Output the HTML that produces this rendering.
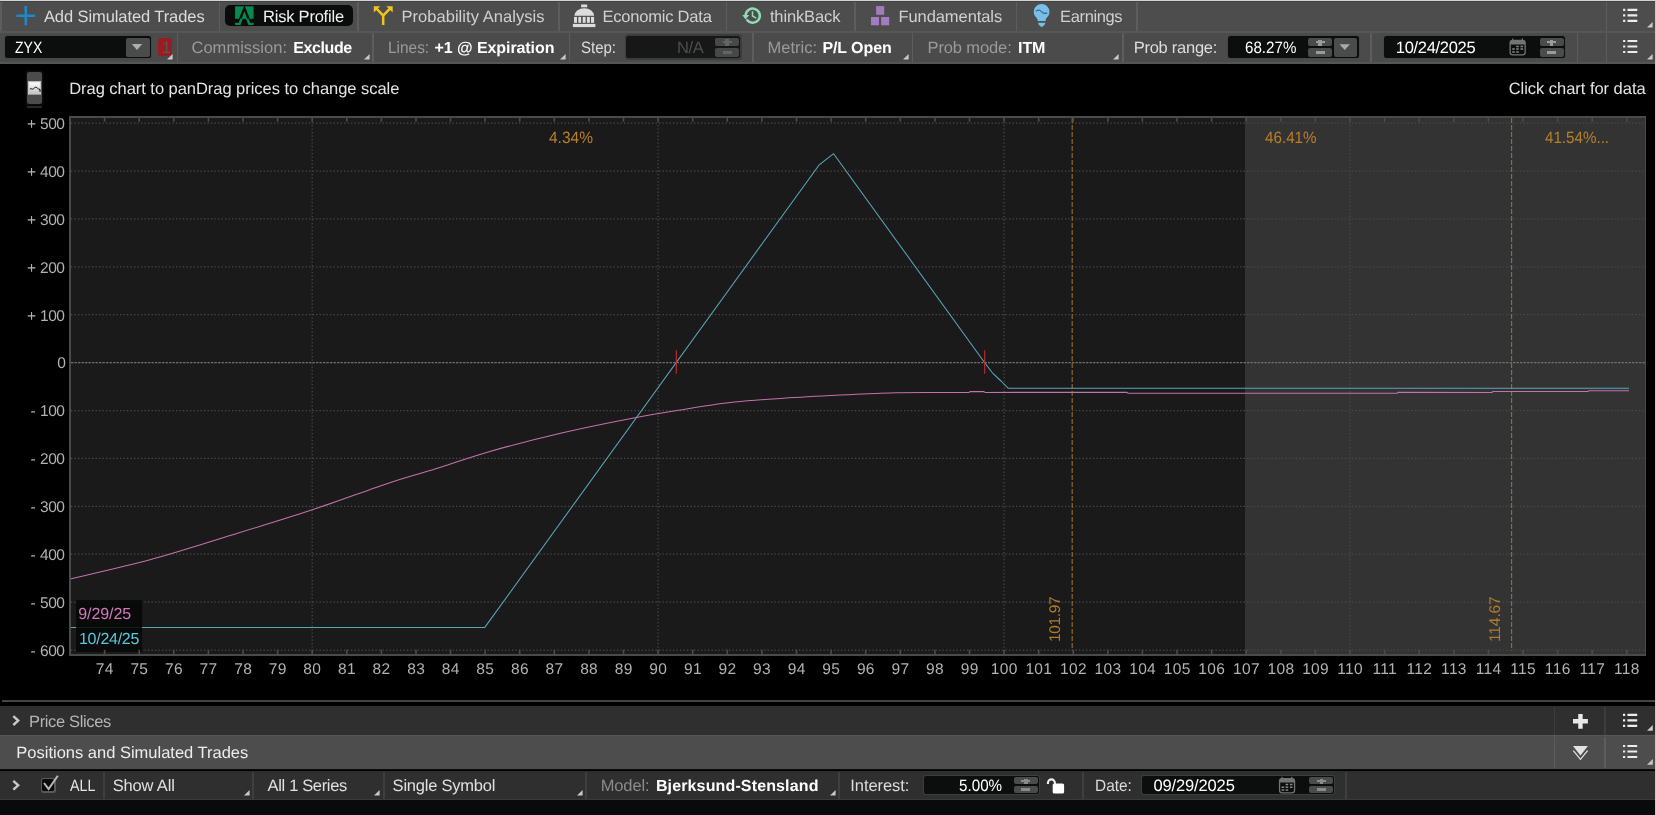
<!DOCTYPE html>
<html><head><meta charset="utf-8"><title>Risk Profile</title>
<style>
html,body{margin:0;padding:0;background:#000;}
body{width:1656px;height:815px;overflow:hidden;position:relative;font-family:"Liberation Sans", sans-serif;}
.t{position:absolute;white-space:pre;line-height:20px;height:20px;font-family:"Liberation Sans", sans-serif;text-rendering:geometricPrecision;}
.r{position:absolute;display:block;}
svg{position:absolute;display:block;overflow:visible}
#root{position:absolute;left:0;top:0;width:1656px;height:815px;will-change:transform;}
</style></head><body><div id="root">
<div class="r" style="left:0px;top:0px;width:1656px;height:64px;background:#4d4d4d;"></div>
<div class="r" style="left:0px;top:0px;width:1656px;height:1px;background:#d2d2d2;"></div>
<div class="r" style="left:0px;top:1px;width:1656px;height:1px;background:#424242;"></div>
<div class="r" style="left:0px;top:31px;width:1656px;height:2px;background:#555656;"></div>
<div class="r" style="left:0px;top:33px;width:1656px;height:29px;background:#4b4b4b;"></div>
<div class="r" style="left:0px;top:62px;width:1656px;height:2px;background:#545555;"></div>
<div class="r" style="left:0px;top:2px;width:2px;height:29px;background:#5c5e5e;"></div>
<div class="r" style="left:218.55px;top:2px;width:1.5px;height:29px;background:#5c5e5e;"></div>
<div class="r" style="left:357.45px;top:2px;width:1.5px;height:29px;background:#5c5e5e;"></div>
<div class="r" style="left:558.15px;top:2px;width:1.5px;height:29px;background:#5c5e5e;"></div>
<div class="r" style="left:725.65px;top:2px;width:1.5px;height:29px;background:#5c5e5e;"></div>
<div class="r" style="left:854.25px;top:2px;width:1.5px;height:29px;background:#5c5e5e;"></div>
<div class="r" style="left:1015.85px;top:2px;width:1.5px;height:29px;background:#5c5e5e;"></div>
<div class="r" style="left:1136.35px;top:2px;width:1.5px;height:29px;background:#5c5e5e;"></div>
<div class="r" style="left:1605.55px;top:2px;width:1.5px;height:29px;background:#5c5e5e;"></div>
<div class="r" style="left:176.75px;top:33px;width:1.5px;height:29px;background:#5c5e5e;"></div>
<div class="r" style="left:372.05px;top:33px;width:1.5px;height:29px;background:#5c5e5e;"></div>
<div class="r" style="left:568.65px;top:33px;width:1.5px;height:29px;background:#5c5e5e;"></div>
<div class="r" style="left:752.05px;top:33px;width:1.5px;height:29px;background:#5c5e5e;"></div>
<div class="r" style="left:911.75px;top:33px;width:1.5px;height:29px;background:#5c5e5e;"></div>
<div class="r" style="left:1122.05px;top:33px;width:1.5px;height:29px;background:#5c5e5e;"></div>
<div class="r" style="left:1370.45px;top:33px;width:1.5px;height:29px;background:#5c5e5e;"></div>
<div class="r" style="left:1576.75px;top:33px;width:1.5px;height:29px;background:#5c5e5e;"></div>
<div class="r" style="left:1605.55px;top:33px;width:1.5px;height:29px;background:#5c5e5e;"></div>
<div class="r" style="left:224.6px;top:5px;width:128px;height:21px;background:#0a0c0c;border-radius:5px;"></div>
<div class="t" style="left:43.90px;top:7px;font-size:16.5px;color:#dcdcdc;font-weight:normal;letter-spacing:-0.083px;">Add Simulated Trades</div>
<div class="t" style="left:263.00px;top:7px;font-size:16.5px;color:#f2f2f2;font-weight:normal;letter-spacing:-0.216px;">Risk Profile</div>
<div class="t" style="left:401.40px;top:7px;font-size:16.5px;color:#d0d0d0;font-weight:normal;letter-spacing:0.051px;">Probability Analysis</div>
<div class="t" style="left:602.40px;top:7px;font-size:16.5px;color:#d0d0d0;font-weight:normal;letter-spacing:-0.200px;">Economic Data</div>
<div class="t" style="left:769.90px;top:7px;font-size:16.5px;color:#d0d0d0;font-weight:normal;letter-spacing:-0.128px;">thinkBack</div>
<div class="t" style="left:898.50px;top:7px;font-size:16.5px;color:#d0d0d0;font-weight:normal;letter-spacing:-0.082px;">Fundamentals</div>
<div class="t" style="left:1060.10px;top:7px;font-size:16.5px;color:#d0d0d0;font-weight:normal;letter-spacing:-0.375px;">Earnings</div>
<div class="r" style="left:3.8px;top:34.7px;width:148.1px;height:24.9px;background:#464747;border-radius:3.5px;"></div>
<div class="r" style="left:5.1px;top:36px;width:145.5px;height:22.3px;background:#0c0e0e;border-radius:2.5px;"></div>
<div class="r" style="left:126px;top:38px;width:23.5px;height:18.6px;background:#4a4c4c;border-radius:2px;"></div>
<div class="r" style="left:158px;top:37.5px;width:14px;height:18px;background:#981c20;border-radius:3px;"></div>
<div class="r" style="left:624.7px;top:34.1px;width:117.1px;height:25.7px;background:#3b3c3c;border-radius:3.5px;"></div>
<div class="r" style="left:626.4px;top:35.9px;width:114.1px;height:22px;background:#171717;border-radius:2.5px;"></div>
<div class="r" style="left:1226.7px;top:34.7px;width:133.6px;height:24.6px;background:#464747;border-radius:3.5px;"></div>
<div class="r" style="left:1228px;top:36px;width:131px;height:22px;background:#0c0e0e;border-radius:2.5px;"></div>
<div class="r" style="left:1382.5px;top:34.7px;width:183.8px;height:24.8px;background:#464747;border-radius:3.5px;"></div>
<div class="r" style="left:1383.8px;top:36px;width:181.2px;height:22.2px;background:#0c0e0e;border-radius:2.5px;"></div>
<div class="r" style="left:714.9px;top:37.8px;width:24.2px;height:8.1px;background:#474949;border-radius:2px;"></div>
<div class="r" style="left:714.9px;top:47.9px;width:24.2px;height:9px;background:#474949;border-radius:2px;"></div>
<div class="r" style="left:722.5px;top:40.75px;width:9px;height:2.2px;background:#646464;"></div>
<div class="r" style="left:725.4px;top:39.4px;width:3.2px;height:6.2px;background:#646464;"></div>
<div class="r" style="left:722.5px;top:51.2px;width:9px;height:2.4px;background:#646464;"></div>
<div class="r" style="left:1308.2px;top:37.9px;width:23.6px;height:8.1px;background:#4a4c4c;border-radius:2px;"></div>
<div class="r" style="left:1308.2px;top:48.2px;width:23.6px;height:8.4px;background:#4a4c4c;border-radius:2px;"></div>
<div class="r" style="left:1315.5px;top:40.85px;width:9px;height:2.2px;background:#9a9a9a;"></div>
<div class="r" style="left:1318.4px;top:39.5px;width:3.2px;height:6.2px;background:#9a9a9a;"></div>
<div class="r" style="left:1315.5px;top:51.2px;width:9px;height:2.4px;background:#9a9a9a;"></div>
<div class="r" style="left:1334px;top:37.9px;width:23.1px;height:18.7px;background:#4a4c4c;border-radius:2px;"></div>
<div class="r" style="left:1539.6px;top:37.9px;width:24.2px;height:8.1px;background:#4a4c4c;border-radius:2px;"></div>
<div class="r" style="left:1539.6px;top:48.2px;width:24.2px;height:8.4px;background:#4a4c4c;border-radius:2px;"></div>
<div class="r" style="left:1547.2px;top:40.85px;width:9px;height:2.2px;background:#9a9a9a;"></div>
<div class="r" style="left:1550.1px;top:39.5px;width:3.2px;height:6.2px;background:#9a9a9a;"></div>
<div class="r" style="left:1547.2px;top:51.2px;width:9px;height:2.4px;background:#9a9a9a;"></div>
<div class="t" style="left:14.70px;top:38px;font-size:16.5px;color:#ffffff;font-weight:normal;letter-spacing:0.000px;transform:scaleX(0.8498);transform-origin:0 0;">ZYX</div>
<div class="t" style="left:161.70px;top:38px;font-size:16.5px;color:#525858;font-weight:normal;letter-spacing:0.000px;">1</div>
<div class="t" style="left:191.50px;top:38px;font-size:16.5px;color:#9a9a9a;font-weight:normal;letter-spacing:0.013px;">Commission:</div>
<div class="t" style="left:293.30px;top:39px;font-size:16px;color:#ffffff;font-weight:bold;letter-spacing:-0.413px;">Exclude</div>
<div class="t" style="left:387.50px;top:38px;font-size:16.5px;color:#9a9a9a;font-weight:normal;letter-spacing:0.000px;transform:scaleX(0.9341);transform-origin:0 0;">Lines:</div>
<div class="t" style="left:434.60px;top:39px;font-size:16px;color:#ffffff;font-weight:bold;letter-spacing:-0.079px;">+1 @ Expiration</div>
<div class="t" style="left:580.60px;top:38px;font-size:16.5px;color:#dcdcdc;font-weight:normal;letter-spacing:0.000px;transform:scaleX(0.9091);transform-origin:0 0;">Step:</div>
<div class="t" style="left:677.10px;top:38px;font-size:16.5px;color:#4e4e4e;font-weight:normal;letter-spacing:-0.400px;">N/A</div>
<div class="t" style="left:767.50px;top:38px;font-size:16.5px;color:#9a9a9a;font-weight:normal;letter-spacing:0.000px;">Metric:</div>
<div class="t" style="left:822.40px;top:39px;font-size:16px;color:#ffffff;font-weight:bold;letter-spacing:-0.086px;">P/L Open</div>
<div class="t" style="left:927.50px;top:38px;font-size:16.5px;color:#9a9a9a;font-weight:normal;letter-spacing:-0.117px;">Prob mode:</div>
<div class="t" style="left:1018.10px;top:39px;font-size:16px;color:#ffffff;font-weight:bold;letter-spacing:-0.150px;">ITM</div>
<div class="t" style="left:1133.70px;top:38px;font-size:16.5px;color:#dcdcdc;font-weight:normal;letter-spacing:-0.255px;">Prob range:</div>
<div class="t" style="left:1244.80px;top:38px;font-size:16.5px;color:#ffffff;font-weight:normal;letter-spacing:0.000px;transform:scaleX(0.9179);transform-origin:0 0;">68.27%</div>
<div class="t" style="left:1395.80px;top:38px;font-size:16.5px;color:#ffffff;font-weight:normal;letter-spacing:-0.303px;">10/24/2025</div>
<svg class="r" style="left:167.4px;top:53.699999999999996px" width="5.6" height="5.6" viewBox="0 0 5.6 5.6"><path d="M5.6 0V5.6H0Z" fill="#c8c8c8"/></svg>
<svg class="r" style="left:363.59999999999997px;top:53.699999999999996px" width="5.6" height="5.6" viewBox="0 0 5.6 5.6"><path d="M5.6 0V5.6H0Z" fill="#c8c8c8"/></svg>
<svg class="r" style="left:559.6999999999999px;top:53.699999999999996px" width="5.6" height="5.6" viewBox="0 0 5.6 5.6"><path d="M5.6 0V5.6H0Z" fill="#c8c8c8"/></svg>
<svg class="r" style="left:903.1999999999999px;top:53.699999999999996px" width="5.6" height="5.6" viewBox="0 0 5.6 5.6"><path d="M5.6 0V5.6H0Z" fill="#c8c8c8"/></svg>
<svg class="r" style="left:1113.1000000000001px;top:53.699999999999996px" width="5.6" height="5.6" viewBox="0 0 5.6 5.6"><path d="M5.6 0V5.6H0Z" fill="#c8c8c8"/></svg>
<svg class="r" style="left:1646.8000000000002px;top:22.1px" width="5.6" height="5.6" viewBox="0 0 5.6 5.6"><path d="M5.6 0V5.6H0Z" fill="#c8c8c8"/></svg>
<svg class="r" style="left:1646.8000000000002px;top:53.6px" width="5.6" height="5.6" viewBox="0 0 5.6 5.6"><path d="M5.6 0V5.6H0Z" fill="#c8c8c8"/></svg>
<div class="t" style="left:69.20px;top:79px;font-size:16.5px;color:#e4e4e4;font-weight:normal;letter-spacing:-0.042px;">Drag chart to panDrag prices to change scale</div>
<div class="t" style="left:1508.70px;top:79px;font-size:16.5px;color:#e4e4e4;font-weight:normal;letter-spacing:-0.033px;">Click chart for data</div>
<div class="r" style="left:2px;top:700.4px;width:1653px;height:2px;background:#454747;"></div>
<div class="r" style="left:0px;top:705.5px;width:1655px;height:30px;background:#2f2f2f;"></div>
<div class="r" style="left:0px;top:735.2px;width:1655px;height:33.5px;background:#4d4d4d;"></div>
<div class="r" style="left:0px;top:735.2px;width:1655px;height:1px;background:#565757;"></div>
<div class="r" style="left:0px;top:768.7px;width:1655px;height:1.8px;background:#0c0c0c;"></div>
<div class="r" style="left:0px;top:770.5px;width:1655px;height:29.5px;background:#2f2f2f;"></div>
<div class="r" style="left:0px;top:799px;width:1655px;height:1px;background:#393a3a;"></div>
<div class="r" style="left:0px;top:800px;width:1656px;height:15px;background:#090a0c;"></div>
<div class="r" style="left:1553.75px;top:707px;width:1.5px;height:27.5px;background:#3c3d3d;"></div>
<div class="r" style="left:1553.75px;top:736.5px;width:1.5px;height:31px;background:#5c5e5e;"></div>
<div class="r" style="left:1604.25px;top:707px;width:1.5px;height:27.5px;background:#3c3d3d;"></div>
<div class="r" style="left:1604.25px;top:736.5px;width:1.5px;height:31px;background:#5c5e5e;"></div>
<div class="r" style="left:102.6px;top:772px;width:2px;height:26.5px;background:#3e3f3f;"></div>
<div class="r" style="left:252.4px;top:772px;width:2px;height:26.5px;background:#3e3f3f;"></div>
<div class="r" style="left:382.7px;top:772px;width:2px;height:26.5px;background:#3e3f3f;"></div>
<div class="r" style="left:585.2px;top:772px;width:2px;height:26.5px;background:#3e3f3f;"></div>
<div class="r" style="left:838px;top:772px;width:2px;height:26.5px;background:#3e3f3f;"></div>
<div class="r" style="left:1081.7px;top:772px;width:2px;height:26.5px;background:#3e3f3f;"></div>
<div class="r" style="left:1345.3px;top:772px;width:2px;height:26.5px;background:#3e3f3f;"></div>
<div class="t" style="left:29.00px;top:712px;font-size:16.5px;color:#b4b4b4;font-weight:normal;letter-spacing:-0.350px;">Price Slices</div>
<div class="t" style="left:16.30px;top:743px;font-size:16.5px;color:#ececec;font-weight:normal;letter-spacing:-0.003px;">Positions and Simulated Trades</div>
<div class="t" style="left:69.70px;top:776px;font-size:16.5px;color:#e4e4e4;font-weight:normal;letter-spacing:0.000px;transform:scaleX(0.8647);transform-origin:0 0;">ALL</div>
<div class="t" style="left:112.70px;top:776px;font-size:16.5px;color:#e0e0e0;font-weight:normal;letter-spacing:-0.164px;">Show All</div>
<div class="t" style="left:267.60px;top:776px;font-size:16.5px;color:#e0e0e0;font-weight:normal;letter-spacing:-0.345px;">All 1 Series</div>
<div class="t" style="left:392.60px;top:776px;font-size:16.5px;color:#e0e0e0;font-weight:normal;letter-spacing:-0.217px;">Single Symbol</div>
<div class="t" style="left:600.70px;top:776px;font-size:16.5px;color:#8c8c8c;font-weight:normal;letter-spacing:-0.120px;">Model:</div>
<div class="t" style="left:655.90px;top:777px;font-size:16px;color:#ffffff;font-weight:bold;letter-spacing:0.139px;">Bjerksund-Stensland</div>
<div class="t" style="left:850.30px;top:776px;font-size:16.5px;color:#dcdcdc;font-weight:normal;letter-spacing:-0.078px;">Interest:</div>
<div class="t" style="left:1094.50px;top:776px;font-size:16.5px;color:#dcdcdc;font-weight:normal;letter-spacing:0.000px;transform:scaleX(0.9346);transform-origin:0 0;">Date:</div>
<div class="r" style="left:923.3px;top:775px;width:116.8px;height:20.3px;background:#3c3d3d;border-radius:3px;"></div>
<div class="r" style="left:924.3px;top:776px;width:114.8px;height:18.3px;background:#0c0e0e;border-radius:2px;"></div>
<div class="r" style="left:1140.7px;top:775px;width:194.7px;height:20.3px;background:#3c3d3d;border-radius:3px;"></div>
<div class="r" style="left:1141.7px;top:776px;width:192.7px;height:18.3px;background:#0c0e0e;border-radius:2px;"></div>
<div class="t" style="left:959.00px;top:776px;font-size:16.5px;color:#ffffff;font-weight:normal;letter-spacing:0.000px;transform:scaleX(0.9219);transform-origin:0 0;">5.00%</div>
<div class="t" style="left:1153.40px;top:776px;font-size:16.5px;color:#ffffff;font-weight:normal;letter-spacing:-0.125px;">09/29/2025</div>
<div class="r" style="left:1013.9px;top:777.2px;width:24.1px;height:7.3px;background:#4a4c4c;border-radius:2px;"></div>
<div class="r" style="left:1013.9px;top:785.9px;width:24.1px;height:7.3px;background:#4a4c4c;border-radius:2px;"></div>
<div class="r" style="left:1021.45px;top:779.75px;width:9px;height:2.2px;background:#8a8a8a;"></div>
<div class="r" style="left:1024.35px;top:778.8px;width:3.2px;height:5.4px;background:#8a8a8a;"></div>
<div class="r" style="left:1021.45px;top:788.35px;width:9px;height:2.4px;background:#8a8a8a;"></div>
<div class="r" style="left:1309.2px;top:777.2px;width:23.9px;height:7.3px;background:#4a4c4c;border-radius:2px;"></div>
<div class="r" style="left:1309.2px;top:785.9px;width:23.9px;height:7.3px;background:#4a4c4c;border-radius:2px;"></div>
<div class="r" style="left:1316.65px;top:779.75px;width:9px;height:2.2px;background:#8a8a8a;"></div>
<div class="r" style="left:1319.55px;top:778.8px;width:3.2px;height:5.4px;background:#8a8a8a;"></div>
<div class="r" style="left:1316.65px;top:788.35px;width:9px;height:2.4px;background:#8a8a8a;"></div>
<svg class="r" style="left:244.0px;top:789.9px" width="5.6" height="5.6" viewBox="0 0 5.6 5.6"><path d="M5.6 0V5.6H0Z" fill="#c8c8c8"/></svg>
<svg class="r" style="left:374.4px;top:789.9px" width="5.6" height="5.6" viewBox="0 0 5.6 5.6"><path d="M5.6 0V5.6H0Z" fill="#c8c8c8"/></svg>
<svg class="r" style="left:577.0px;top:789.9px" width="5.6" height="5.6" viewBox="0 0 5.6 5.6"><path d="M5.6 0V5.6H0Z" fill="#c8c8c8"/></svg>
<svg class="r" style="left:830.1px;top:789.9px" width="5.6" height="5.6" viewBox="0 0 5.6 5.6"><path d="M5.6 0V5.6H0Z" fill="#c8c8c8"/></svg>
<svg class="r" style="left:1646.5px;top:725.3000000000001px" width="5.8" height="5.8" viewBox="0 0 5.8 5.8"><path d="M5.8 0V5.8H0Z" fill="#c8c8c8"/></svg>
<svg class="r" style="left:1646.5px;top:758.6px" width="5.8" height="5.8" viewBox="0 0 5.8 5.8"><path d="M5.8 0V5.8H0Z" fill="#c8c8c8"/></svg>
<div class="r" style="left:40.5px;top:777.6px;width:15.3px;height:15.3px;background:#585858;border-radius:2.5px;"></div>
<div class="r" style="left:42px;top:779.1px;width:12.3px;height:12.3px;background:#0a0c0c;border-radius:1.5px;"></div>
<svg style="left:0;top:0" width="1656" height="815" viewBox="0 0 1656 815"><path d="M16.4 15.7H35.1M25.8 6.1V25.3" stroke="#1c8aca" stroke-width="2.5" fill="none"/><rect x="235.1" y="6.3" width="18.5" height="12.5" fill="#078a52"/><path d="M239.6 20.2L244.4 8.4L249.2 20.2" stroke="#0a0c0c" stroke-width="2.3" fill="none" stroke-linejoin="miter"/><path d="M235.1 23.9H239.6L241.6 18.8M253.6 23.9H249.2L247.2 18.8" stroke="#078a52" stroke-width="2.4" fill="none"/><path d="M242.6 18.8L244.4 14L246.2 18.8Z" fill="#078a52"/><path d="M383.2 25.1V15.2M383.2 15.6L376.6 8.6M383.2 15.6L389.9 8.6" stroke="#f0c419" stroke-width="2.5" fill="none"/><path d="M373.8 6.2H380.2L373.8 12.6ZM392.7 6.2H386.3L392.7 12.6Z" fill="#f0c419"/><rect x="581.1" y="4.5" width="6.1" height="2.8" fill="#dcdcdc"/><path d="M574.4 15.7A9.85 7.5 0 0 1 594.1 15.7Z" fill="#dcdcdc"/><rect x="574" y="16.9" width="3.0" height="5.9" fill="#dcdcdc"/><rect x="578.3" y="16.9" width="2.8" height="5.9" fill="#dcdcdc"/><rect x="582.7" y="16.9" width="2.9" height="5.9" fill="#dcdcdc"/><rect x="586.9" y="16.9" width="3.0" height="5.9" fill="#dcdcdc"/><rect x="591" y="16.9" width="3.1" height="5.9" fill="#dcdcdc"/><rect x="572.9" y="23.9" width="22.5" height="3.2" fill="#dcdcdc"/><path d="M746.68 19.46A7.1 7.1 0 1 0 745.61 15.33" stroke="#8fdcb4" stroke-width="2.5" fill="none"/><path d="M742.3 15.0H749.2L745.6 19.6Z" fill="#8fdcb4"/><path d="M752.5 11.2V16L756.2 18.2" stroke="#8fdcb4" stroke-width="1.5" fill="none"/><rect x="876.1" y="6.1" width="8.1" height="8.7" fill="#a27cbe"/><rect x="871" y="17" width="8" height="8.3" fill="#a27cbe"/><rect x="881.1" y="17" width="8.1" height="8.3" fill="#a27cbe"/><path d="M1037.6 21V19.6C1037.4 18 1033.75 16.5 1033.75 11.8A7.85 7.85 0 0 1 1049.45 11.8C1049.45 16.5 1045.9 18 1045.7 19.6V21Z" fill="#78c0ec"/><path d="M1038 22.8H1045.4L1044.6 24.8L1041.7 27.2L1038.8 24.8Z" fill="#78c0ec"/><path d="M1036 11.3C1038.5 9.3 1040.3 10.3 1041.7 11.8S1045 14 1047.2 12.9" stroke="#47677d" stroke-width="1.2" fill="none"/><path d="M1623.1 9.8h2.2M1627.5 9.8h9.8M1623.1 15.3h2.2M1627.5 15.3h9.8M1623.1 20.8h2.2M1627.5 20.8h9.8" stroke="#ececec" stroke-width="2.2" fill="none"/><path d="M1623.1 41.0h2.2M1627.5 41.0h9.8M1623.1 46.5h2.2M1627.5 46.5h9.8M1623.1 52.0h2.2M1627.5 52.0h9.8" stroke="#ececec" stroke-width="2.2" fill="none"/><path d="M1623.0 714.9h2.2M1627.4 714.9h9.8M1623.0 720.4h2.2M1627.4 720.4h9.8M1623.0 725.9h2.2M1627.4 725.9h9.8" stroke="#ececec" stroke-width="2.2" fill="none"/><path d="M1623.0 746.0h2.2M1627.4 746.0h9.8M1623.0 751.5h2.2M1627.4 751.5h9.8M1623.0 757.0h2.2M1627.4 757.0h9.8" stroke="#ececec" stroke-width="2.2" fill="none"/><path d="M131.8 44.1H142.2L137 49.9Z" fill="#aeaeae"/><path d="M1339.5 44.2H1349.9L1344.7 49.9Z" fill="#aaaaaa"/><rect x="1510.15" y="40.449999999999996" width="15" height="14.4" rx="2.6" fill="none" stroke="#747474" stroke-width="1.3"/><path d="M1510.15 44.4V43.0a2.6 2.6 0 0 1 2.6 -2.6h9.8a2.6 2.6 0 0 1 2.6 2.6V44.4Z" fill="#747474"/><path d="M1512.7 38.599999999999994v3.8M1522.4 38.599999999999994v3.8" stroke="#747474" stroke-width="1.2"/><path d="M1516.2 46.4h2.6M1520.5 46.4h2.6M1512.2 49.1h2.6M1516.2 49.1h2.6M1520.5 49.1h2.6M1512.2 51.9h2.6M1516.2 51.9h2.6" stroke="#858585" stroke-width="1.5"/><rect x="1279.5500000000002" y="778.55" width="15" height="14.4" rx="2.6" fill="none" stroke="#747474" stroke-width="1.3"/><path d="M1279.5500000000002 782.5V781.1a2.6 2.6 0 0 1 2.6 -2.6h9.8a2.6 2.6 0 0 1 2.6 2.6V782.5Z" fill="#747474"/><path d="M1282.1000000000001 776.6999999999999v3.8M1291.8000000000002 776.6999999999999v3.8" stroke="#747474" stroke-width="1.2"/><path d="M1285.6 784.5h2.6M1289.9 784.5h2.6M1281.6 787.2h2.6M1285.6 787.2h2.6M1289.9 787.2h2.6M1281.6 790.0h2.6M1285.6 790.0h2.6" stroke="#858585" stroke-width="1.5"/><rect x="25.4" y="70.4" width="18.2" height="35" rx="2.5" fill="#0b0b0b"/><rect x="27" y="72" width="15" height="32" rx="2.2" fill="#4a4c4c"/><rect x="27" y="106.1" width="15" height="1.8" fill="#2c2c2c"/><defs><linearGradient id="tg" x1="0" y1="0" x2="0" y2="1"><stop offset="0" stop-color="#ffffff"/><stop offset="1" stop-color="#c4c4c4"/></linearGradient></defs><rect x="28" y="81.1" width="13.1" height="13.5" fill="#c8c8c8"/><rect x="29.2" y="82.3" width="10.7" height="11.1" fill="url(#tg)"/><path d="M29.8 89.2C31 87.6 32 90 33.4 88.8S35.5 86.6 36.8 87.6S38.6 89.6 40 89.2V92" stroke="#111" stroke-width="1" fill="none"/><path d="M13.3 716.2L18.2 720.6L13.3 725.0" stroke="#c8c8c8" stroke-width="2.4" fill="none"/><path d="M13.3 780.9L18.2 785.3L13.3 789.6999999999999" stroke="#c8c8c8" stroke-width="2.4" fill="none"/><path d="M44 783L48.6 789L57.8 775.8" stroke="#b8b8b8" stroke-width="2" fill="none" stroke-linejoin="miter"/><rect x="1052.7" y="783.4" width="11.4" height="10.2" rx="1.6" fill="#ffffff"/><path d="M1047.9 784V782.9A3.5 3.5 0 0 1 1054.9 782.9V784.5" stroke="#f0f0f0" stroke-width="2.1" fill="none"/><path d="M1573 721.2H1587.9M1580.45 714.1V728.7" stroke="#e8e8e8" stroke-width="4.4" fill="none"/><path d="M1573 746.1H1587.9L1580.45 755.4Z" fill="#e2e2e2"/><path d="M1573.3 750.6L1580.45 759.3L1587.6 750.6" stroke="#e2e2e2" stroke-width="1.3" fill="none"/></svg>
<div class="r" style="left:69px;top:116px;width:1577px;height:540px;background:#4a4a4a;"></div>
<div class="r" style="left:71px;top:118px;width:1574px;height:536px;background:#1a1a1a;"></div>
<div class="r" style="left:1245.3px;top:118px;width:399.70000000000005px;height:536px;background:#333333;"></div>
<div class="r" style="left:1655px;top:0px;width:1px;height:815px;background:#cacaca;"></div>
<svg style="left:0;top:0" width="1656" height="815" viewBox="0 0 1656 815"><path d="M71 123.1H1645M71 171.0H1645M71 218.9H1645M71 266.8H1645M71 314.7H1645M71 410.5H1645M71 458.4H1645M71 506.3H1645M71 554.2H1645M71 602.1H1645M71 650.0H1645M312.2 118V654M658.1 118V654M1004.1 118V654M1350.0 118V654" stroke="#4a4a4a" stroke-width="1.25" stroke-dasharray="1.3 2.2" fill="none"/><path d="M71 362.6H1645" stroke="#707070" stroke-width="1.25" stroke-dasharray="2.4 1.1" fill="none"/><path d="M1072.2 118V650.5" stroke="#966c2e" stroke-width="1.15" stroke-dasharray="4.9 2.1" fill="none"/><path d="M1511.6 118V650.5" stroke="#966c2e" stroke-width="1.15" stroke-dasharray="4.9 2.1" fill="none"/><polyline points="71,627.5 484.8,627.4 818.9,165.2 833.6,153.7 984.7,362.7 992.4,372.8 1001,381 1008.1,388.2 1629,388.2" stroke="#58a8b4" stroke-width="1.05" fill="none" stroke-linejoin="round"/><path d="M71 578.7C84.3 575.5 124.0 566.8 150.8 559.5C177.6 552.2 205.0 543.2 231.8 535C258.6 526.8 284.9 518.8 311.5 510C338.1 501.2 369.9 489.3 391.3 482.2C412.7 475.1 423.7 472.7 440 467.6C456.3 462.5 468.6 457.5 489 451.7C509.4 445.9 538.2 438.5 562.7 432.8C587.2 427.1 615.8 421.4 636.3 417.5C656.8 413.6 669.0 411.8 685.4 409.2C701.8 406.6 718.1 403.9 734.5 402.1C750.9 400.3 766.0 399.4 783.6 398.2C801.2 397.0 822.3 395.9 840 395C857.7 394.1 873.3 393.3 890 392.9C906.7 392.5 931.7 392.6 940 392.5L969 392.4L970 391.6L984 391.6L985 392.4L1127 392.3L1128 393.3L1397 393.3L1398 392.3L1492 392.4L1493 391.5L1588 391.5L1589 390.7L1629 390.7" stroke="#c472ac" stroke-width="1.05" fill="none" stroke-linejoin="round"/><path d="M676.3 350.2V373.7" stroke="#c4282c" stroke-width="1.15" fill="none"/><path d="M984.7 350.2V373.7" stroke="#c4282c" stroke-width="1.15" fill="none"/><rect x="76.1" y="600.1" width="66" height="51.8" fill="#060808" fill-opacity="0.88"/><path d="M104.6 118v3.8M104.6 654v-4.2M139.2 118v3.8M139.2 654v-4.2M173.8 118v3.8M173.8 654v-4.2M208.4 118v3.8M208.4 654v-4.2M243.0 118v3.8M243.0 654v-4.2M277.6 118v3.8M277.6 654v-4.2M312.2 118v3.8M312.2 654v-4.2M346.8 118v3.8M346.8 654v-4.2M381.4 118v3.8M381.4 654v-4.2M416.0 118v3.8M416.0 654v-4.2M450.5 118v3.8M450.5 654v-4.2M485.1 118v3.8M485.1 654v-4.2M519.7 118v3.8M519.7 654v-4.2M554.3 118v3.8M554.3 654v-4.2M588.9 118v3.8M588.9 654v-4.2M623.5 118v3.8M623.5 654v-4.2M658.1 118v3.8M658.1 654v-4.2M692.7 118v3.8M692.7 654v-4.2M727.3 118v3.8M727.3 654v-4.2M761.9 118v3.8M761.9 654v-4.2M796.5 118v3.8M796.5 654v-4.2M831.1 118v3.8M831.1 654v-4.2M865.7 118v3.8M865.7 654v-4.2M900.3 118v3.8M900.3 654v-4.2M934.9 118v3.8M934.9 654v-4.2M969.5 118v3.8M969.5 654v-4.2M1004.1 118v3.8M1004.1 654v-4.2M1038.7 118v3.8M1038.7 654v-4.2M1073.3 118v3.8M1073.3 654v-4.2M1107.9 118v3.8M1107.9 654v-4.2M1142.4 118v3.8M1142.4 654v-4.2M1177.0 118v3.8M1177.0 654v-4.2M1211.6 118v3.8M1211.6 654v-4.2M1246.2 118v3.8M1246.2 654v-4.2M1280.8 118v3.8M1280.8 654v-4.2M1315.4 118v3.8M1315.4 654v-4.2M1350.0 118v3.8M1350.0 654v-4.2M1384.6 118v3.8M1384.6 654v-4.2M1419.2 118v3.8M1419.2 654v-4.2M1453.8 118v3.8M1453.8 654v-4.2M1488.4 118v3.8M1488.4 654v-4.2M1523.0 118v3.8M1523.0 654v-4.2M1557.6 118v3.8M1557.6 654v-4.2M1592.2 118v3.8M1592.2 654v-4.2M1626.8 118v3.8M1626.8 654v-4.2" stroke="#4c4c4c" stroke-width="1.6" fill="none"/></svg>
<div class="t" style="left:40.00px;top:115px;font-size:15.5px;color:#b2b2b2;font-weight:normal;letter-spacing:-0.438px;">500</div>
<div class="t" style="left:26.90px;top:115px;font-size:15.5px;color:#b2b2b2;font-weight:normal;letter-spacing:0.000px;">+</div>
<div class="t" style="left:40.00px;top:163px;font-size:15.5px;color:#b2b2b2;font-weight:normal;letter-spacing:-0.438px;">400</div>
<div class="t" style="left:26.90px;top:163px;font-size:15.5px;color:#b2b2b2;font-weight:normal;letter-spacing:0.000px;">+</div>
<div class="t" style="left:40.00px;top:211px;font-size:15.5px;color:#b2b2b2;font-weight:normal;letter-spacing:-0.438px;">300</div>
<div class="t" style="left:26.90px;top:211px;font-size:15.5px;color:#b2b2b2;font-weight:normal;letter-spacing:0.000px;">+</div>
<div class="t" style="left:40.00px;top:259px;font-size:15.5px;color:#b2b2b2;font-weight:normal;letter-spacing:-0.438px;">200</div>
<div class="t" style="left:26.90px;top:259px;font-size:15.5px;color:#b2b2b2;font-weight:normal;letter-spacing:0.000px;">+</div>
<div class="t" style="left:40.00px;top:307px;font-size:15.5px;color:#b2b2b2;font-weight:normal;letter-spacing:-0.438px;">100</div>
<div class="t" style="left:26.90px;top:307px;font-size:15.5px;color:#b2b2b2;font-weight:normal;letter-spacing:0.000px;">+</div>
<div class="t" style="left:57.20px;top:354px;font-size:15.5px;color:#b2b2b2;font-weight:normal;letter-spacing:0.000px;">0</div>
<div class="t" style="left:40.00px;top:402px;font-size:15.5px;color:#b2b2b2;font-weight:normal;letter-spacing:-0.438px;">100</div>
<div class="t" style="left:30.40px;top:402px;font-size:15.5px;color:#b2b2b2;font-weight:normal;letter-spacing:0.000px;">-</div>
<div class="t" style="left:40.00px;top:450px;font-size:15.5px;color:#b2b2b2;font-weight:normal;letter-spacing:-0.438px;">200</div>
<div class="t" style="left:30.40px;top:450px;font-size:15.5px;color:#b2b2b2;font-weight:normal;letter-spacing:0.000px;">-</div>
<div class="t" style="left:40.00px;top:498px;font-size:15.5px;color:#b2b2b2;font-weight:normal;letter-spacing:-0.438px;">300</div>
<div class="t" style="left:30.40px;top:498px;font-size:15.5px;color:#b2b2b2;font-weight:normal;letter-spacing:0.000px;">-</div>
<div class="t" style="left:40.00px;top:546px;font-size:15.5px;color:#b2b2b2;font-weight:normal;letter-spacing:-0.438px;">400</div>
<div class="t" style="left:30.40px;top:546px;font-size:15.5px;color:#b2b2b2;font-weight:normal;letter-spacing:0.000px;">-</div>
<div class="t" style="left:40.00px;top:594px;font-size:15.5px;color:#b2b2b2;font-weight:normal;letter-spacing:-0.438px;">500</div>
<div class="t" style="left:30.40px;top:594px;font-size:15.5px;color:#b2b2b2;font-weight:normal;letter-spacing:0.000px;">-</div>
<div class="t" style="left:40.00px;top:642px;font-size:15.5px;color:#b2b2b2;font-weight:normal;letter-spacing:-0.438px;">600</div>
<div class="t" style="left:30.40px;top:642px;font-size:15.5px;color:#b2b2b2;font-weight:normal;letter-spacing:0.000px;">-</div>
<div class="t" style="left:95.80px;top:660px;font-size:15.5px;color:#b2b2b2;font-weight:normal;letter-spacing:0.350px;">74</div>
<div class="t" style="left:130.39px;top:660px;font-size:15.5px;color:#b2b2b2;font-weight:normal;letter-spacing:0.350px;">75</div>
<div class="t" style="left:164.99px;top:660px;font-size:15.5px;color:#b2b2b2;font-weight:normal;letter-spacing:0.350px;">76</div>
<div class="t" style="left:199.58px;top:660px;font-size:15.5px;color:#b2b2b2;font-weight:normal;letter-spacing:0.350px;">77</div>
<div class="t" style="left:234.18px;top:660px;font-size:15.5px;color:#b2b2b2;font-weight:normal;letter-spacing:0.350px;">78</div>
<div class="t" style="left:268.77px;top:660px;font-size:15.5px;color:#b2b2b2;font-weight:normal;letter-spacing:0.350px;">79</div>
<div class="t" style="left:303.37px;top:660px;font-size:15.5px;color:#b2b2b2;font-weight:normal;letter-spacing:0.350px;">80</div>
<div class="t" style="left:337.96px;top:660px;font-size:15.5px;color:#b2b2b2;font-weight:normal;letter-spacing:0.350px;">81</div>
<div class="t" style="left:372.56px;top:660px;font-size:15.5px;color:#b2b2b2;font-weight:normal;letter-spacing:0.350px;">82</div>
<div class="t" style="left:407.16px;top:660px;font-size:15.5px;color:#b2b2b2;font-weight:normal;letter-spacing:0.350px;">83</div>
<div class="t" style="left:441.75px;top:660px;font-size:15.5px;color:#b2b2b2;font-weight:normal;letter-spacing:0.350px;">84</div>
<div class="t" style="left:476.34px;top:660px;font-size:15.5px;color:#b2b2b2;font-weight:normal;letter-spacing:0.350px;">85</div>
<div class="t" style="left:510.94px;top:660px;font-size:15.5px;color:#b2b2b2;font-weight:normal;letter-spacing:0.350px;">86</div>
<div class="t" style="left:545.54px;top:660px;font-size:15.5px;color:#b2b2b2;font-weight:normal;letter-spacing:0.350px;">87</div>
<div class="t" style="left:580.13px;top:660px;font-size:15.5px;color:#b2b2b2;font-weight:normal;letter-spacing:0.350px;">88</div>
<div class="t" style="left:614.73px;top:660px;font-size:15.5px;color:#b2b2b2;font-weight:normal;letter-spacing:0.350px;">89</div>
<div class="t" style="left:649.32px;top:660px;font-size:15.5px;color:#b2b2b2;font-weight:normal;letter-spacing:0.350px;">90</div>
<div class="t" style="left:683.92px;top:660px;font-size:15.5px;color:#b2b2b2;font-weight:normal;letter-spacing:0.350px;">91</div>
<div class="t" style="left:718.51px;top:660px;font-size:15.5px;color:#b2b2b2;font-weight:normal;letter-spacing:0.350px;">92</div>
<div class="t" style="left:753.11px;top:660px;font-size:15.5px;color:#b2b2b2;font-weight:normal;letter-spacing:0.350px;">93</div>
<div class="t" style="left:787.70px;top:660px;font-size:15.5px;color:#b2b2b2;font-weight:normal;letter-spacing:0.350px;">94</div>
<div class="t" style="left:822.30px;top:660px;font-size:15.5px;color:#b2b2b2;font-weight:normal;letter-spacing:0.350px;">95</div>
<div class="t" style="left:856.89px;top:660px;font-size:15.5px;color:#b2b2b2;font-weight:normal;letter-spacing:0.350px;">96</div>
<div class="t" style="left:891.49px;top:660px;font-size:15.5px;color:#b2b2b2;font-weight:normal;letter-spacing:0.350px;">97</div>
<div class="t" style="left:926.08px;top:660px;font-size:15.5px;color:#b2b2b2;font-weight:normal;letter-spacing:0.350px;">98</div>
<div class="t" style="left:960.68px;top:660px;font-size:15.5px;color:#b2b2b2;font-weight:normal;letter-spacing:0.350px;">99</div>
<div class="t" style="left:990.78px;top:660px;font-size:15.5px;color:#b2b2b2;font-weight:normal;letter-spacing:0.350px;">100</div>
<div class="t" style="left:1025.38px;top:660px;font-size:15.5px;color:#b2b2b2;font-weight:normal;letter-spacing:0.350px;">101</div>
<div class="t" style="left:1059.97px;top:660px;font-size:15.5px;color:#b2b2b2;font-weight:normal;letter-spacing:0.350px;">102</div>
<div class="t" style="left:1094.57px;top:660px;font-size:15.5px;color:#b2b2b2;font-weight:normal;letter-spacing:0.350px;">103</div>
<div class="t" style="left:1129.16px;top:660px;font-size:15.5px;color:#b2b2b2;font-weight:normal;letter-spacing:0.350px;">104</div>
<div class="t" style="left:1163.76px;top:660px;font-size:15.5px;color:#b2b2b2;font-weight:normal;letter-spacing:0.350px;">105</div>
<div class="t" style="left:1198.35px;top:660px;font-size:15.5px;color:#b2b2b2;font-weight:normal;letter-spacing:0.350px;">106</div>
<div class="t" style="left:1232.95px;top:660px;font-size:15.5px;color:#b2b2b2;font-weight:normal;letter-spacing:0.350px;">107</div>
<div class="t" style="left:1267.54px;top:660px;font-size:15.5px;color:#b2b2b2;font-weight:normal;letter-spacing:0.350px;">108</div>
<div class="t" style="left:1302.14px;top:660px;font-size:15.5px;color:#b2b2b2;font-weight:normal;letter-spacing:0.350px;">109</div>
<div class="t" style="left:1337.30px;top:660px;font-size:15.5px;color:#b2b2b2;font-weight:normal;letter-spacing:0.350px;">110</div>
<div class="t" style="left:1372.45px;top:660px;font-size:15.5px;color:#b2b2b2;font-weight:normal;letter-spacing:0.350px;">111</div>
<div class="t" style="left:1406.48px;top:660px;font-size:15.5px;color:#b2b2b2;font-weight:normal;letter-spacing:0.350px;">112</div>
<div class="t" style="left:1441.08px;top:660px;font-size:15.5px;color:#b2b2b2;font-weight:normal;letter-spacing:0.350px;">113</div>
<div class="t" style="left:1475.67px;top:660px;font-size:15.5px;color:#b2b2b2;font-weight:normal;letter-spacing:0.350px;">114</div>
<div class="t" style="left:1510.27px;top:660px;font-size:15.5px;color:#b2b2b2;font-weight:normal;letter-spacing:0.350px;">115</div>
<div class="t" style="left:1544.87px;top:660px;font-size:15.5px;color:#b2b2b2;font-weight:normal;letter-spacing:0.350px;">116</div>
<div class="t" style="left:1579.46px;top:660px;font-size:15.5px;color:#b2b2b2;font-weight:normal;letter-spacing:0.350px;">117</div>
<div class="t" style="left:1614.05px;top:660px;font-size:15.5px;color:#b2b2b2;font-weight:normal;letter-spacing:0.350px;">118</div>
<div class="t" style="left:549.00px;top:128px;font-size:16.5px;color:#b88028;font-weight:normal;letter-spacing:0.000px;transform:scaleX(0.9390);transform-origin:0 0;">4.34%</div>
<div class="t" style="left:1264.80px;top:128px;font-size:16.5px;color:#b88028;font-weight:normal;letter-spacing:0.000px;transform:scaleX(0.9214);transform-origin:0 0;">46.41%</div>
<div class="t" style="left:1545.00px;top:128px;font-size:16.5px;color:#b88028;font-weight:normal;letter-spacing:0.000px;transform:scaleX(0.9190);transform-origin:0 0;">41.54%...</div>
<div class="t" style="left:78.30px;top:605px;font-size:16px;color:#d078b8;font-weight:normal;letter-spacing:-0.079px;">9/29/25</div>
<div class="t" style="left:79.00px;top:630px;font-size:16px;color:#5cc8dc;font-weight:normal;letter-spacing:-0.279px;">10/24/25</div>
<div class="t" style="left:1060.2px;top:627.8px;font-size:15.5px;color:#b07c2c;letter-spacing:-0.335px;transform-origin:0 14px;transform:rotate(-90deg);">101.97</div>
<div class="t" style="left:1500.2px;top:627.8px;font-size:15.5px;color:#b07c2c;letter-spacing:-0.110px;transform-origin:0 14px;transform:rotate(-90deg);">114.67</div>
</div></body></html>
